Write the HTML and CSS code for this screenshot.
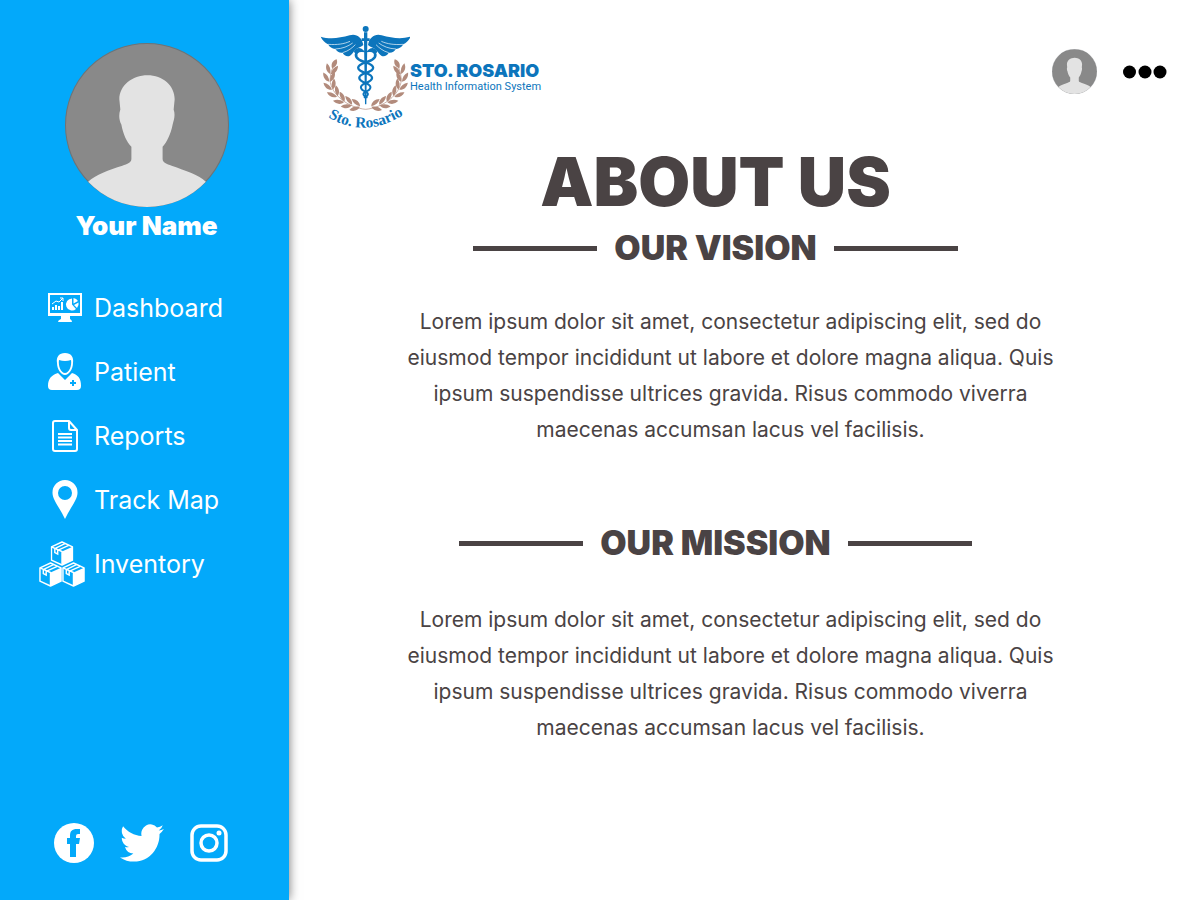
FILE: index.html
```html
<!DOCTYPE html>
<html lang="en">
<head>
<meta charset="utf-8">
<meta name="viewport" content="width=device-width, initial-scale=1">
<title>About Us - Sto. Rosario Health Information System</title>
<link rel="stylesheet" href="styles.css">
</head>
<body>
<svg class="defs" aria-hidden="true">
  <symbol id="person" viewBox="0 0 163 163">
    <circle cx="81.500" cy="81.500" r="81" fill="#898989" stroke="#6f7375"/>
    <path fill="#e3e3e3" d="M82 32C97 32 109 42 109 56L108 66C110 72 108 77 107 81C105 91 101 99 97 103V115C97 119 101 120 106 122C120 127 133 131 140 138A81 81 0 0 1 23 138C30 131 44 126 57 122C62 120 66 119 66 115V103C61 98 58 91 56 81C54 77 53 72 55 66L54 56C54 42 67 32 82 32Z"/>
  </symbol>
  <symbol id="leaves" viewBox="-20 -30 40 40" overflow="visible">
    <path d="M-1 3C-13 0 -20 -12 -17 -26C-6 -20 -1 -10 -1 3ZM1 3C13 0 20 -12 17 -26C6 -20 1 -10 1 3Z"/>
  </symbol>
  <symbol id="box" viewBox="0 0 24 26">
    <path fill="#03a9fa" stroke="#fff" stroke-width="1.500" stroke-linejoin="round" d="M12 1L23 6V20L12 25L1 20V6Z"/>
    <path fill="#fff" d="M12 11L23 6V20L12 25Z"/>
    <path fill="none" stroke="#fff" stroke-width="1.500" d="M1 6L12 11V25M4.500 8L15.500 2.500M8 9.500L19 4.500M4.500 8V12L7.500 13.500V9.500"/>
  </symbol>
</svg>
<div class="app">
  <aside class="sidebar">
    <div class="profile">
      <svg class="profile-photo" role="img" aria-label="Profile photo"><use href="#person"/></svg>
      <p class="profile-name">Your Name</p>
    </div>
    <nav class="menu">
      <a class="menu-item" href="#dashboard">
        <svg class="menu-icon" width="34" height="30" viewBox="0 0 34 30" aria-hidden="true">
          <path fill="#fff" fill-rule="evenodd" d="M0 0H34V23H22V26Q24 27 24 29H10Q10 27 13 26V23H0ZM2 2V20H32V2Z"/>
          <path fill="#fff" d="M4 14h2v3H4zM7 12h2v5H7zM10 13h2v4h-2zM13 9h2v8h-2z"/>
          <path fill="none" stroke="#fff" d="M4 11L8 8L11 9L15 5M12 5H15V8"/>
          <path fill="#fff" d="M24 5.500V11.500L28 16A6 6 0 1 1 24 5.500ZM25.500 5A6 6 0 0 1 30 8L25.500 10.500ZM26 12L30.500 9.500A6 6 0 0 1 29 15Z"/>
        </svg>
        <span>Dashboard</span>
      </a>
      <a class="menu-item" href="#patient">
        <svg class="menu-icon" width="34" height="38" viewBox="0 0 34 38" aria-hidden="true">
          <path fill="#fff" fill-rule="evenodd" d="M17 0C23 0 26 4 25 10C25 16 21 22 17 22C13 22 9 16 9 10C8 4 11 0 17 0ZM11 7C10 13 13 20 17 20C21 20 24 13 23 7Q17 9 11 7Z"/>
          <path fill="#fff" d="M10 20L17 27L24 20C30 22 33 25 33 33Q33 37 29 37H4Q0 37 0 33C0 25 4 22 10 20Z"/>
          <path fill="#03a9fa" d="M24 27h2v2h2v2h-2v2h-2v-2h-2v-2h2z"/>
        </svg>
        <span>Patient</span>
      </a>
      <a class="menu-item" href="#reports">
        <svg class="menu-icon" width="26" height="32" viewBox="0 0 26 32" aria-hidden="true">
          <path fill="none" stroke="#fff" stroke-width="2" stroke-linejoin="round" d="M3 1H17L25 10V29Q25 31 23 31H3Q1 31 1 29V3Q1 1 3 1ZM17 1V8Q17 10 19 10H25M6 14H20M6 17.500H20M6 21H20M6 24.500H20"/>
        </svg>
        <span>Reports</span>
      </a>
      <a class="menu-item" href="#map">
        <svg class="menu-icon" width="26" height="40" viewBox="0 0 26 40" aria-hidden="true">
          <path fill="#fff" fill-rule="evenodd" d="M13 0A12.500 12.500 0 0 1 25.500 13C25.500 20 18 28 13 39C8 28 .5 20 .5 13A12.500 12.500 0 0 1 13 0ZM13 6A7 7 0 1 0 13 20A7 7 0 1 0 13 6Z"/>
        </svg>
        <span>Track Map</span>
      </a>
      <a class="menu-item" href="#inventory">
        <svg class="menu-icon menu-icon-wide" width="46" height="46" viewBox="0 0 46 46" aria-hidden="true">
          <use href="#box" x="11.500" y="0" width="23" height="25"/>
          <use href="#box" x="0" y="21" width="23" height="25"/>
          <use href="#box" x="23" y="21" width="23" height="25"/>
        </svg>
        <span>Inventory</span>
      </a>
    </nav>
    <div class="social">
      <a href="#facebook" aria-label="Facebook">
        <svg width="40" height="40" viewBox="0 0 40 40"><circle cx="20" cy="20" r="20" fill="#fff"/><path fill="#03a9fa" d="M16 34V21H13V15H16V13C16 8 18 6 23 6H26V11H24Q22 11 22 13V15H26L25 21H22V34Z"/></svg>
      </a>
      <a href="#twitter" aria-label="Twitter">
        <svg width="44" height="38" viewBox="0 0 24 20" preserveAspectRatio="none"><path fill="#fff" d="M23.950 2.600a10 10 0 0 1-2.830.800A4.900 4.900 0 0 0 23.300.600a9.900 9.900 0 0 1-3.130 1.200 4.900 4.900 0 0 0-8.400 4.500C7.700 6.100 4.100 4.200 1.670 1.200a4.900 4.900 0 0 0 1.520 6.600 4.900 4.900 0 0 1-2.230-.600v.060c0 2.300 1.600 4.400 3.950 4.800a5 5 0 0 1-2.210.100 4.900 4.900 0 0 0 4.600 3.400A9.900 9.900 0 0 1 0 17.600a14 14 0 0 0 7.550 2.200c9.050 0 14-7.500 14-14v-.600a10 10 0 0 0 2.400-2.600z"/></svg>
      </a>
      <a href="#instagram" aria-label="Instagram">
        <svg width="38" height="38" viewBox="0 0 38 38"><rect x="2" y="2" width="34" height="34" rx="9" fill="none" stroke="#fff" stroke-width="3.500"/><circle cx="19" cy="19" r="8" fill="none" stroke="#fff" stroke-width="3.500"/><circle cx="29" cy="9" r="2.500" fill="#fff"/></svg>
      </a>
    </div>
  </aside>
  <div class="page">
    <header class="topbar">
      <a class="brand" href="#home">
        <svg class="brand-mark" viewBox="30 30 270 315" role="img" aria-label="Sto. Rosario seal">
          <defs>
            <path id="name-arc" d="M46 302Q167 378 288 294"/>
            <g id="half">
              <g fill="#b28b7c">
                <use href="#leaves" x="-20" y="-30" width="40" height="40" transform="translate(147 274) rotate(-78)"/>
                <use href="#leaves" x="-20" y="-30" width="40" height="40" transform="translate(123 269) rotate(-67)"/>
                <use href="#leaves" x="-20" y="-30" width="40" height="40" transform="translate(100 259) rotate(-54)"/>
                <use href="#leaves" x="-20" y="-30" width="40" height="40" transform="translate(80 242) rotate(-38)"/>
                <use href="#leaves" x="-20" y="-30" width="40" height="40" transform="translate(66 221) rotate(-22)"/>
                <use href="#leaves" x="-20" y="-30" width="40" height="40" transform="translate(59 197) rotate(-5)"/>
                <use href="#leaves" x="-20" y="-30" width="40" height="40" transform="translate(62 174) rotate(12)"/>
                <path d="M66 160C62 146 68 137 80 133C84 145 79 155 66 160Z"/>
              </g>
              <path fill="none" stroke="#b28b7c" stroke-width="2" d="M167 283C115 278 63 240 60 194Q60 170 72 150"/>
              <path fill="#0c75bc" d="M160 90C156 66 138 55 119 61C88 70 58 73 32 65C37 76 45 83 54 88C59 97 66 101 76 102C81 110 88 114 98 113C102 122 112 126 120 122C127 119 129 112 135 106C141 98 149 99 160 90Z"/>
              <path fill="none" stroke="#fff" stroke-width="2" d="M54 88C82 90 102 87 120 79M76 102C98 101 114 94 128 84M98 113C116 108 127 98 136 89"/>
              <path fill="none" stroke="#0c75bc" stroke-width="8" stroke-linecap="round" d="M136 110C141 101 151 102 156 107C143 106 134 116 140 127C146 137 158 138 167 142"/>
              <path fill="none" stroke="#0c75bc" stroke-width="7" stroke-linecap="round" d="M167 142C197 152 197 164 167 174C140 183 143 195 167 204"/>
              <path fill="none" stroke="#0c75bc" stroke-width="6" stroke-linecap="round" d="M167 204C188 213 184 223 167 230C156 236 160 243 170 247"/>
            </g>
          </defs>
          <use href="#half"/>
          <use href="#half" transform="translate(334 0) scale(-1 1)"/>
          <circle cx="167" cy="42" r="9" fill="#0c75bc"/>
          <path fill="#0c75bc" d="M162 52H172V70H179V78H172L169 268H165L162 78H155V70H162Z"/>
          <text class="brand-arc"><textPath href="#name-arc" startOffset="50%">Sto. Rosario</textPath></text>
        </svg>
        <span class="brand-text">
          <strong class="brand-name">STO. ROSARIO</strong>
          <span class="brand-tagline">Health Information System</span>
        </span>
      </a>
      <div class="account">
        <svg class="account-photo" role="img" aria-label="Account"><use href="#person"/></svg>
        <button class="more" type="button" aria-label="More options">
          <svg width="44" height="14" viewBox="0 0 44 14"><circle cx="6.500" cy="7" r="6.500"/><circle cx="22" cy="7" r="6.500"/><circle cx="37" cy="7" r="6.500"/></svg>
        </button>
      </div>
    </header>
    <main class="content">
      <h1 class="title">ABOUT US</h1>
      <section class="block">
        <h2 class="subtitle">OUR VISION</h2>
        <p class="copy">Lorem ipsum dolor sit amet, consectetur adipiscing elit, sed do<br>eiusmod tempor incididunt ut labore et dolore magna aliqua. Quis<br>ipsum suspendisse ultrices gravida. Risus commodo viverra<br>maecenas accumsan lacus vel facilisis.</p>
      </section>
      <section class="block">
        <h2 class="subtitle">OUR MISSION</h2>
        <p class="copy">Lorem ipsum dolor sit amet, consectetur adipiscing elit, sed do<br>eiusmod tempor incididunt ut labore et dolore magna aliqua. Quis<br>ipsum suspendisse ultrices gravida. Risus commodo viverra<br>maecenas accumsan lacus vel facilisis.</p>
      </section>
    </main>
  </div>
</div>
</body>
</html>
```
FILE: styles.css
```css
* { box-sizing: border-box; }
body {
  margin: 0;
  background: #fff;
  color: #4a4344;
  font-family: Inter, "Open Sans", sans-serif;
}
h1, h2, p { margin: 0; }
a { color: inherit; text-decoration: none; }
svg { display: block; flex: none; }
.defs { position: absolute; width: 0; height: 0; }

.app {
  display: grid;
  grid-template-columns: 289px 1fr;
  min-height: 100vh;
}
.sidebar {
  display: flex;
  flex-direction: column;
  padding: 43px 0 37px;
  background: #03a9fa;
  color: #fff;
  box-shadow: 0 0 10px rgba(0, 0, 0, 0.55);
}
.profile {
  display: flex;
  flex-direction: column;
  align-items: center;
  padding-left: 4px;
}
.profile-photo { width: 164px; height: 164px; }
.profile-name {
  padding-top: 3px;
  font-size: 26px;
  line-height: 32px;
  font-weight: 900;
}
.menu {
  display: flex;
  flex-direction: column;
  padding: 34px 0 0 38px;
}
.menu-item {
  display: grid;
  grid-template-columns: 56px 1fr;
  align-items: center;
  height: 64px;
  font-size: 25px;
  line-height: 32px;
}
.menu-icon { margin-left: 27px; transform: translateX(-50%); }
.menu-icon-wide { margin-left: 24px; }
.social {
  display: flex;
  align-items: center;
  gap: 26px;
  margin-top: auto;
  padding-left: 54px;
}

.page { padding: 25px 33px 40px 31px; }
.topbar {
  display: flex;
  align-items: flex-start;
  justify-content: space-between;
}
.brand { display: flex; color: #0c75bc; }
.brand-mark { width: 90px; height: 105px; }
.brand-arc {
  fill: #0c75bc;
  font-family: "Liberation Serif", serif;
  font-size: 46px;
  font-weight: 700;
  text-anchor: middle;
}
.brand-text {
  display: flex;
  flex-direction: column;
  padding-top: 37px;
}
.brand-name { font-size: 18px; line-height: 18px; font-weight: 900; }
.brand-tagline {
  font-family: Roboto, sans-serif;
  font-size: 11px;
  line-height: 14px;
}
.account {
  display: flex;
  align-items: center;
  gap: 26px;
  padding-top: 24px;
}
.account-photo { width: 45px; height: 45px; }
.more { padding: 0; border: 0; background: none; cursor: pointer; }

.content { padding: 16px 56px 0 0; text-align: center; }
.title {
  font-size: 67px;
  line-height: 72px;
  font-weight: 900;
}
.block { padding-top: 10px; }
.block + .block { padding-top: 75px; }
.subtitle {
  display: flex;
  align-items: center;
  justify-content: center;
  gap: 17px;
  font-size: 34px;
  line-height: 40px;
  font-weight: 900;
}
.subtitle::before,
.subtitle::after {
  content: "";
  width: 124px;
  height: 5px;
  background: #4a4344;
}
.copy {
  padding: 36px 0 0 30px;
  font-size: 21px;
  line-height: 36px;
}
.block + .block .copy { padding-top: 39px; }
```
